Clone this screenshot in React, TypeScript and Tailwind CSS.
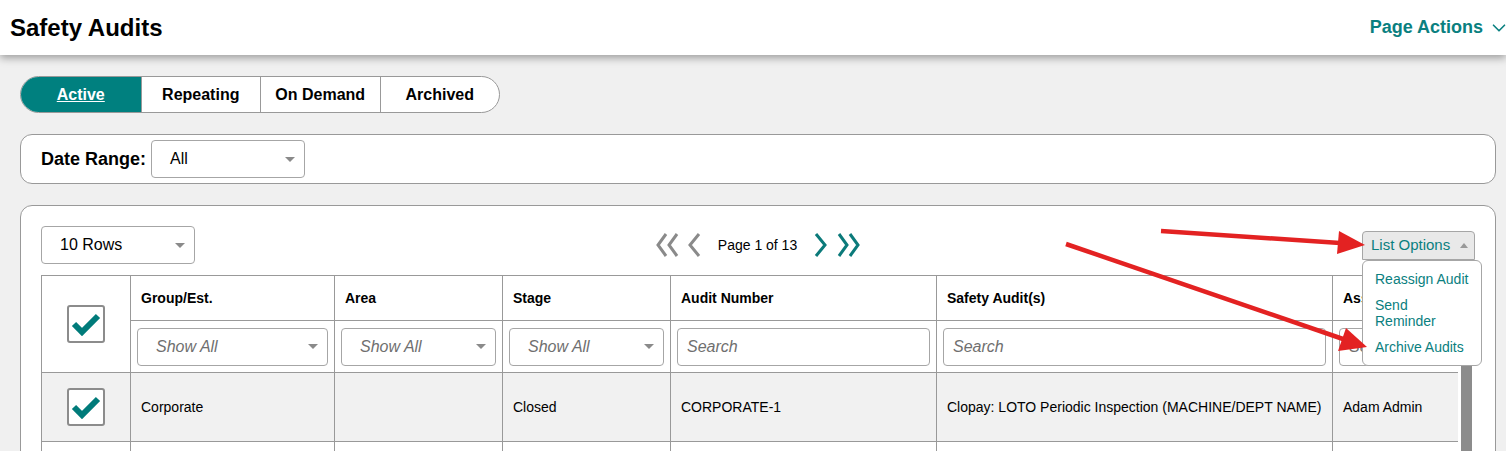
import { ChevronDown } from 'lucide-react';

const cols = [89, 204, 168, 168, 266, 396, 200];

function Caret() {
    return <span className="h-0 w-0 border-x-[5px] border-t-[5px] border-x-transparent border-t-[#8a8a8a]" />;
}

function SelectBox({ label, italic, className }: { label: string; italic?: boolean; className?: string }) {
    return (
        <div className={`flex h-[38px] items-center justify-between rounded-[4px] border border-[#a6a6a6] bg-white pl-[18px] pr-[9px] ${className ?? ''}`}>
            <span className={italic ? 'text-[16px] italic text-[#6f6f6f]' : 'text-[16px] text-black'}>{label}</span>
            <Caret />
        </div>
    );
}

function SearchBox() {
    return (
        <input placeholder="Search" readOnly
            className="h-[38px] w-full rounded-[4px] border border-[#a6a6a6] bg-white px-[9px] text-[16px] italic placeholder:text-[#6f6f6f] focus:outline-none" />
    );
}

function CheckBox() {
    return (
        <div className="mx-auto flex h-[38px] w-[38px] items-center justify-center rounded-[3px] border-2 border-[#8c8c8c] bg-white">
            <svg width="30" height="24" viewBox="0 0 30 24">
                <polyline points="3,12 11,20 27,4" fill="none" stroke="#007b7a" strokeWidth="6" strokeLinejoin="miter" />
            </svg>
        </div>
    );
}

function DoubleChevron({ dir, color }: { dir: 'l' | 'r'; color: string }) {
    const pts = dir === 'l' ? ['10,1 2,12 10,23', '21,1 13,12 21,23'] : ['2,1 10,12 2,23', '13,1 21,12 13,23'];
    return (
        <svg width="23" height="24" viewBox="0 0 23 24">
            {pts.map(p => <polyline key={p} points={p} fill="none" stroke={color} strokeWidth="3" />)}
        </svg>
    );
}

function Chevron({ dir, color }: { dir: 'l' | 'r'; color: string }) {
    return (
        <svg width="14" height="24" viewBox="0 0 14 24">
            <polyline points={dir === 'l' ? '12,1 3,12 12,23' : '2,1 11,12 2,23'} fill="none" stroke={color} strokeWidth="3" />
        </svg>
    );
}

const headers = ['Group/Est.', 'Area', 'Stage', 'Audit Number', 'Safety Audit(s)', 'Assigned To'];

export default function App() {
    return (
        <div className="relative min-h-[451px] bg-[#f0f0f0] font-['Liberation_Sans',Arial,sans-serif] text-black">
            <header className="relative z-10 flex h-[55px] items-center justify-between bg-white pl-[10px] shadow-[0_3px_8px_rgba(0,0,0,0.35)]">
                <h1 className="text-[24px] font-bold">Safety Audits</h1>
                <div className="flex items-center gap-[5px] text-[18px] font-bold text-[#0a8080]">
                    Page Actions
                    <ChevronDown size={22} strokeWidth={1.8} className="mr-[-4px]" />
                </div>
            </header>

            <main className="pl-[20px] pr-[10px] pt-[21px]">
                <div className="flex h-[37px] w-[480px] overflow-hidden rounded-full border border-[#999] bg-white text-[16px] font-bold">
                    <div className="flex w-[120px] items-center justify-center bg-[#00807f] text-white underline">Active</div>
                    <div className="flex w-[120px] items-center justify-center border-l border-[#999]">Repeating</div>
                    <div className="flex w-[120px] items-center justify-center border-l border-[#999]">On Demand</div>
                    <div className="flex w-[120px] items-center justify-center border-l border-[#999]">Archived</div>
                </div>

                <div className="mt-[21px] flex h-[50px] items-center rounded-[12px] border border-[#999] bg-white px-[20px]">
                    <span className="text-[18px] font-bold">Date Range:</span>
                    <SelectBox label="All" className="ml-[5px] w-[154px]" />
                </div>

                <div className="mt-[21px] rounded-[12px] border border-[#999] bg-white px-[20px] pb-[20px] pt-[20px]">
                    <div className="grid grid-cols-[1fr_auto_1fr] items-center">
                        <SelectBox label="10 Rows" className="w-[154px]" />
                        <div className="flex items-center">
                            <DoubleChevron dir="l" color="#8a8a8a" />
                            <span className="ml-[8px]"><Chevron dir="l" color="#8a8a8a" /></span>
                            <span className="mx-[17px] text-[14px]">Page 1 of 13</span>
                            <Chevron dir="r" color="#0b7a7a" />
                            <span className="ml-[9px]"><DoubleChevron dir="r" color="#0b7a7a" /></span>
                        </div>
                        <div className="relative flex justify-end">
                            <div className="flex h-[29px] w-[113px] items-center justify-between rounded-t-[4px] border border-[#a6a6a6] bg-[#e9e9e9] pl-[8px] pr-[6px] text-[15px] text-[#0a8080]">
                                List Options
                                <span className="h-0 w-0 border-x-[4px] border-b-[5px] border-x-transparent border-b-[#999]" />
                            </div>
                            <div className="absolute right-[-7px] top-[29px] z-20 flex w-[120px] flex-col gap-[10px] rounded-[6px] border border-[#a6a6a6] bg-white py-[10px] pl-[12px] text-[14px] leading-[16px] text-[#0a8080]">
                                <span className="whitespace-nowrap">Reassign Audit</span>
                                <span>Send<br />Reminder</span>
                                <span className="whitespace-nowrap">Archive Audits</span>
                            </div>
                        </div>
                    </div>

                    <div className="mt-[11px] flex">
                        <div className="w-[1417px] overflow-hidden">
                            <table className="table-fixed border-collapse" style={{ width: cols.reduce((a, b) => a + b, 0) }}>
                                <colgroup>
                                    {cols.map((w, i) => <col key={i} style={{ width: w }} />)}
                                </colgroup>
                                <thead>
                                    <tr className="h-[45px]">
                                        <th rowSpan={2} className="border border-[#999]"><CheckBox /></th>
                                        {headers.map(h => (
                                            <th key={h} className="whitespace-nowrap border border-[#999] px-[10px] text-left text-[14px] font-bold">{h}</th>
                                        ))}
                                    </tr>
                                    <tr className="h-[52px]">
                                        <td className="border border-[#999] px-[6px]"><SelectBox label="Show All" italic /></td>
                                        <td className="border border-[#999] px-[6px]"><SelectBox label="Show All" italic /></td>
                                        <td className="border border-[#999] px-[6px]"><SelectBox label="Show All" italic /></td>
                                        <td className="border border-[#999] px-[6px]"><SearchBox /></td>
                                        <td className="border border-[#999] px-[6px]"><SearchBox /></td>
                                        <td className="border border-[#999] px-[6px]"><SearchBox /></td>
                                    </tr>
                                </thead>
                                <tbody className="text-[14px]">
                                    <tr className="h-[69px] bg-[#f1f1f1]">
                                        <td className="border border-[#999]"><CheckBox /></td>
                                        <td className="border border-[#999] px-[10px]">Corporate</td>
                                        <td className="border border-[#999] px-[10px]"></td>
                                        <td className="border border-[#999] px-[10px]">Closed</td>
                                        <td className="border border-[#999] px-[10px]">CORPORATE-1</td>
                                        <td className="whitespace-nowrap border border-[#999] px-[10px]">Clopay: LOTO Periodic Inspection (MACHINE/DEPT NAME)</td>
                                        <td className="border border-[#999] px-[10px]">Adam Admin</td>
                                    </tr>
                                    <tr className="h-[69px] bg-white">
                                        {cols.map((_, i) => <td key={i} className="border border-[#999]"></td>)}
                                    </tr>
                                </tbody>
                            </table>
                        </div>
                        <div className="w-[17px] bg-white pl-[3px]">
                            <div className="h-full w-[11px] bg-[#8c8c8c]" />
                        </div>
                    </div>
                </div>
            </main>

            {/* annotation arrows */}
            <svg className="pointer-events-none absolute left-0 top-0 z-30" width="1506" height="451">
                <line x1="1161" y1="231" x2="1340" y2="243" stroke="#e32222" strokeWidth="4.5" />
                <polygon points="1365,245 1337,254 1339,231" fill="#e32222" />
                <line x1="1066" y1="244" x2="1343" y2="339" stroke="#e32222" strokeWidth="4.5" />
                <polygon points="1367,347 1338,351 1346,328" fill="#e32222" />
            </svg>
        </div>
    );
}
